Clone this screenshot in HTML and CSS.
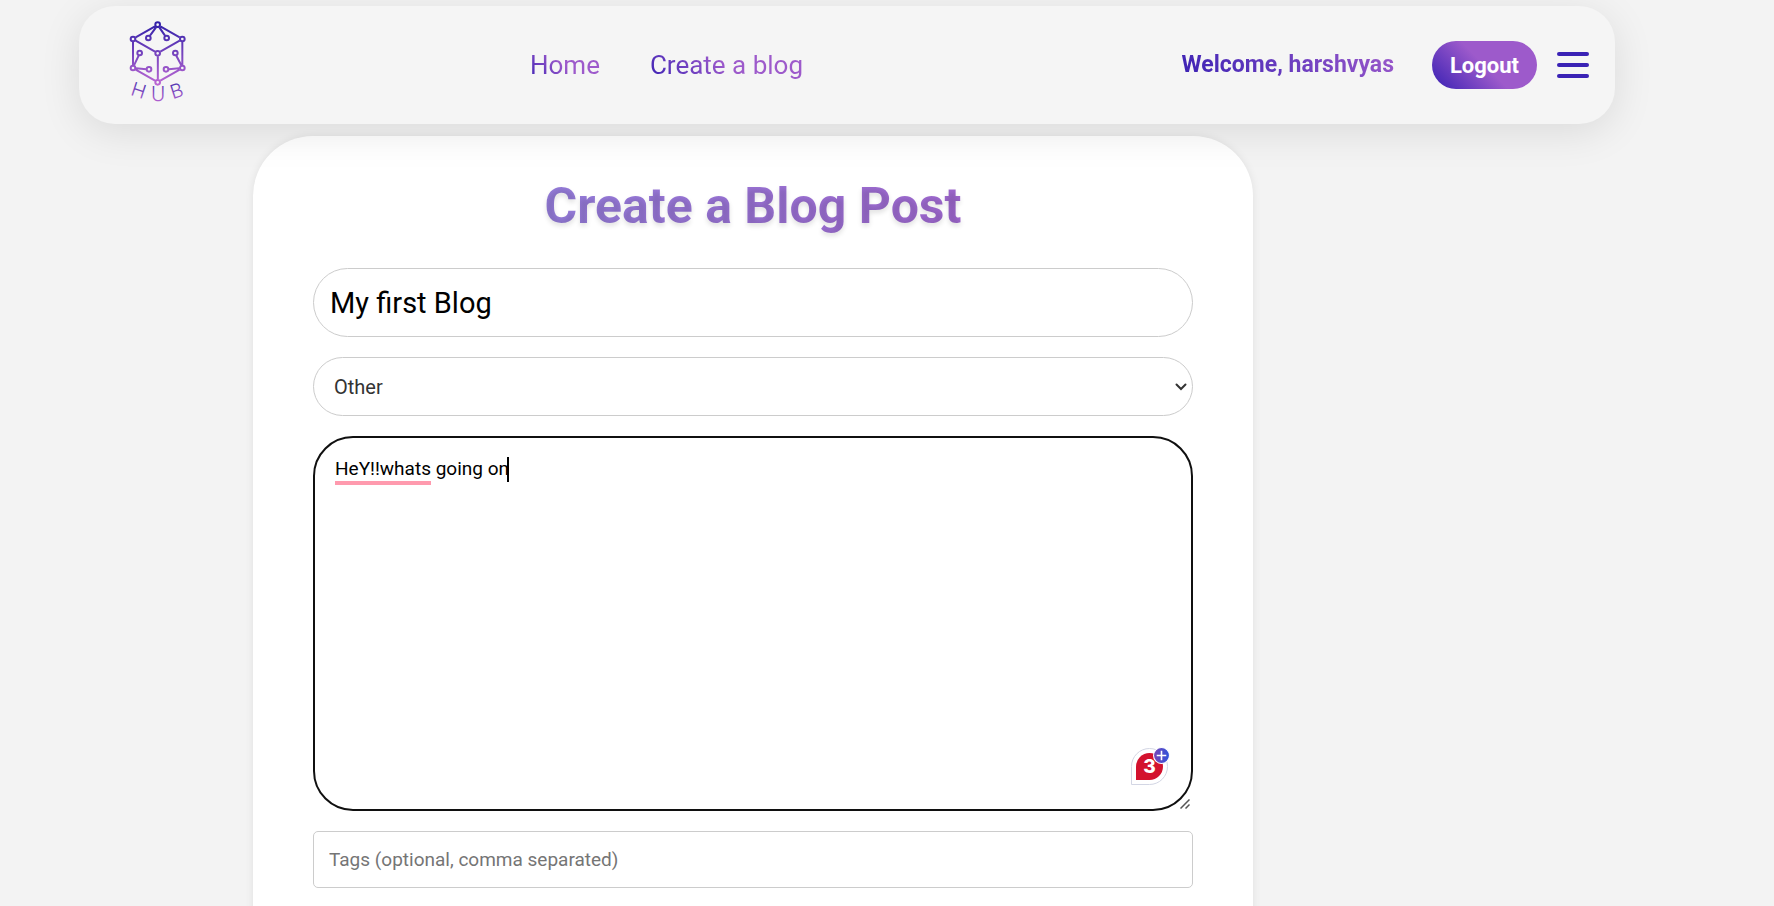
FILE: index.html
```html
<!DOCTYPE html>
<html lang="en">
<head>
<meta charset="utf-8">
<meta name="viewport" content="width=device-width, initial-scale=1">
<title>Create a Blog Post</title>
<link rel="stylesheet" href="styles.css">
</head>
<body>
<header class="navbar">
  <a class="logo" href="#" aria-label="Hub home">
    <svg class="logo-art" viewBox="207 60 174 270" aria-hidden="true">
      <defs>
        <linearGradient id="cube" gradientUnits="userSpaceOnUse" x1="0" y1="66" x2="0" y2="256">
          <stop offset="0" stop-color="#2f1fa8"/>
          <stop offset="1" stop-color="#bd68d4"/>
        </linearGradient>
        <linearGradient id="word" gradientUnits="userSpaceOnUse" x1="0" y1="246" x2="0" y2="304">
          <stop offset="0" stop-color="#4a30b0"/>
          <stop offset="1" stop-color="#b060d0"/>
        </linearGradient>
      </defs>
      <g fill="none" stroke="url(#cube)" stroke-width="6">
        <path d="M285 79 227 112M301 79 359 112M288 82 270 107M298 82 315 107M219 126V195M367 126V195M227 122 285 155M359 122 301 155M293.500 169V238M227 209 285 242M359 209 301 242M222 196 236 167M364 196 349 167M228 205 259 208M358 205 326 208"/>
        <circle cx="293" cy="74" r="7"/><circle cx="219" cy="117" r="7"/><circle cx="367" cy="117" r="7"/>
        <circle cx="293" cy="160" r="7"/><circle cx="219" cy="204" r="7"/><circle cx="367" cy="204" r="7"/>
        <circle cx="293" cy="247" r="7"/><circle cx="265" cy="114" r="7"/><circle cx="320" cy="114" r="7"/>
        <circle cx="239" cy="159" r="7"/><circle cx="346" cy="159" r="7"/><circle cx="267" cy="208" r="7"/>
        <circle cx="318" cy="208" r="7"/>
      </g>
      <g class="logo-word" fill="url(#word)" text-anchor="middle">
        <text x="236" y="292" transform="rotate(18 236 272)">H</text>
        <text x="294" y="303">U</text>
        <text x="350" y="293" transform="rotate(-18 350 273)">B</text>
      </g>
    </svg>
  </a>
  <nav class="links">
    <a class="link" href="#">Home</a>
    <a class="link" href="#">Create a blog</a>
  </nav>
  <div class="account">
    <span class="welcome">Welcome, harshvyas</span>
    <button class="logout" type="button">Logout</button>
    <button class="menu" type="button" aria-label="Menu"><span class="bar"></span><span class="bar"></span><span class="bar"></span></button>
  </div>
</header>
<main class="page">
  <form class="card">
    <h1 class="heading">Create a Blog Post</h1>
    <input class="field title-field" type="text" aria-label="Title" value="My first Blog">
    <div class="select-wrap">
      <select class="field category" aria-label="Category"><option>Other</option></select>
      <svg class="chevron" viewBox="0 0 12 8" aria-hidden="true"><path d="M1.500 1.500 6 6 10.500 1.500" fill="none" stroke="#333" stroke-width="2" stroke-linecap="round"/></svg>
    </div>
    <div class="editor">
      <textarea class="field content" aria-label="Content" spellcheck="false">HeY!!whats going on</textarea>
      <span class="underline"></span>
      <span class="caret"></span>
      <div class="checker">
        <span class="count">3</span>
        <svg class="plus" viewBox="0 0 16 16" aria-hidden="true">
          <defs><linearGradient id="plus" x1="0" y1="0" x2="1" y2="0"><stop offset="0" stop-color="#7a45b5"/><stop offset="1" stop-color="#2c52dc"/></linearGradient></defs>
          <circle cx="8" cy="8" r="7.500" fill="url(#plus)" stroke="#fff"/>
          <path d="M8 3.500V12.500M3.500 8H12.500" stroke="#fff" stroke-width="1.500"/>
        </svg>
      </div>
      <svg class="grip" viewBox="0 0 10 10" aria-hidden="true"><path d="M.5 9.500 9.500.5M5.500 9.500 9.500 5.500" stroke="#555" stroke-width="1.500"/></svg>
    </div>
    <input class="field tags" type="text" aria-label="Tags" placeholder="Tags (optional, comma separated)">
  </form>
</main>
</body>
</html>
```
FILE: styles.css
```css
* {
  box-sizing: border-box;
}

body {
  margin: 0;
  min-height: 100vh;
  overflow: hidden;
  background: #f3f3f3;
  font-family: Roboto, "Open Sans", sans-serif;
}

.navbar {
  position: relative;
  z-index: 2;
  display: grid;
  grid-template-columns: 1fr auto 2fr;
  align-items: center;
  max-width: 1536px;
  height: 118px;
  margin: 6px 80px 0 79px;
  padding: 0 26px 0 50px;
  border-radius: 36px;
  background: #f5f5f5;
  box-shadow: 0 8px 40px rgba(0, 0, 0, 0.1);
}

.logo {
  display: block;
  width: 58px;
}

.logo-art {
  display: block;
  width: 58px;
  height: 90px;
}

.logo-word {
  font-family: Inter, sans-serif;
  font-size: 58px;
  font-weight: 300;
}

.links {
  display: flex;
  gap: 50px;
  padding-left: 8px;
}

.link {
  background: linear-gradient(45deg, #3820b3, #9d5acb 50%);
  background-clip: text;
  color: transparent;
  font-size: 26px;
  line-height: 36px;
  text-decoration: none;
}

.account {
  display: flex;
  align-items: center;
  justify-content: flex-end;
}

.welcome {
  margin-right: 38px;
  background: linear-gradient(45deg, #3820b3, #9d5acb);
  background-clip: text;
  color: transparent;
  font-size: 23px;
  font-weight: 700;
  line-height: 36px;
}

.logout {
  width: 105px;
  height: 48px;
  margin-right: 20px;
  padding: 0;
  border: 0;
  border-radius: 24px;
  background: linear-gradient(45deg, #3820b3, #9d5acb 50%);
  color: #fff;
  font-family: inherit;
  font-size: 22px;
  font-weight: 700;
}

.menu {
  display: grid;
  gap: 7px;
  width: 32px;
  padding: 0;
  border: 0;
  background: none;
}

.bar {
  height: 4px;
  border-radius: 2px;
  background: #3a22b5;
}

.page {
  max-width: 1506px;
  padding: 12px 20px 0;
}

.card {
  display: flex;
  flex-direction: column;
  gap: 20px;
  max-width: 1000px;
  margin: 0 auto;
  padding: 40px 60px 120px;
  border-radius: 60px;
  background: #fff;
  box-shadow: 0 0 8px rgba(0, 0, 0, 0.08);
}

.heading {
  margin: 0 0 12px;
  background: linear-gradient(90deg, #8f88e0, #a45cc8);
  background-clip: text;
  color: transparent;
  text-shadow: 0 3px 5px rgba(0, 0, 0, 0.12);
  font-size: 50px;
  font-weight: 700;
  line-height: 60px;
  text-align: center;
}

.field {
  display: block;
  width: 100%;
  border: 1px solid #ccc;
  background: #fff;
  color: #000;
  font-family: inherit;
  font-size: 20px;
  outline: 0;
}

.title-field {
  height: 69px;
  padding: 0 16px;
  border-radius: 35px;
  font-size: 29px;
}

.select-wrap,
.editor {
  position: relative;
}

.category {
  height: 59px;
  padding: 0 20px;
  border-radius: 30px;
  color: #333;
  appearance: none;
}

.chevron {
  position: absolute;
  top: 26px;
  right: 6px;
  width: 12px;
  height: 8px;
  pointer-events: none;
}

.content {
  height: 375px;
  padding: 18px 20px;
  border: 2px solid #101010;
  border-radius: 40px;
  font-size: 19px;
  line-height: 26px;
  resize: none;
}

.underline {
  position: absolute;
  top: 45px;
  left: 22px;
  width: 96px;
  height: 4px;
  background: #ff9aae;
}

.caret {
  position: absolute;
  top: 21px;
  left: 194px;
  width: 2px;
  height: 25px;
  background: #000;
}

.checker {
  position: absolute;
  right: 25px;
  bottom: 26px;
  width: 37px;
  height: 37px;
  padding: 4px;
  border: 1px solid #d3d6e4;
  border-radius: 50% 50% 50% 0;
  background: #fff;
}

.count {
  display: block;
  width: 27px;
  height: 27px;
  border-radius: 50% 50% 50% 0;
  background: #d3122e;
  color: #fff;
  font-family: Inter, sans-serif;
  font-size: 19px;
  font-weight: 800;
  line-height: 27px;
  text-align: center;
}

.plus {
  position: absolute;
  top: -2px;
  right: -3px;
  width: 17px;
  height: 17px;
}

.grip {
  position: absolute;
  right: 3px;
  bottom: 2px;
  width: 10px;
  height: 10px;
}

.tags {
  height: 57px;
  padding: 0 15px;
  border-radius: 5px;
  font-size: 19px;
}

.tags::placeholder {
  color: #757575;
}
```
